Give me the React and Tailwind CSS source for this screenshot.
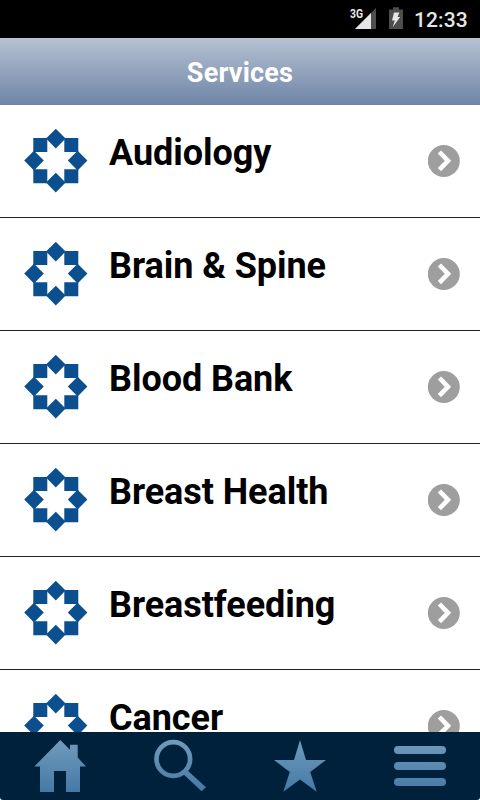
const SERVICES = [
  "Audiology",
  "Brain & Spine",
  "Blood Bank",
  "Breast Health",
  "Breastfeeding",
  "Cancer",
];

function StatusBar() {
  return (
    <div className="flex h-[38px] shrink-0 items-start bg-black pl-[350px] text-[#e6e6e6]">
      <svg className="h-[38px] w-[64px] shrink-0" viewBox="350 0 64 38">
        <path d="M355 29 L376 8 V29 Z" fill="#4d4d4d" />
        <path d="M355 29 L371 13 V29 Z" fill="#e6e6e6" />
        <text x="350" y="17.6" fontFamily="Roboto" fontWeight="700" fontSize="12.3" textLength="13" lengthAdjust="spacingAndGlyphs" fill="#e6e6e6">
          3G
        </text>
        <path d="M389 9.5 H393 V7.3 H399 V9.5 H403 V29 H389 Z" fill="#4d4d4d" />
        <path d="M394 12.5 H399.4 L397.6 17 H400.2 L392.8 27 L394.8 20.5 H392 Z" fill="#e6e6e6" />
      </svg>
      <span className="mt-px text-[21px] font-medium leading-[39px] tracking-[0.1px]">12:33</span>
    </div>
  );
}

function Logo() {
  return (
    <svg className="ml-6 mt-6 h-16 w-16 shrink-0" viewBox="0 0 64 64" fill="#0b4f8f">
      <path d="M9.3 9.1H23.3V23.1H9.3ZM40.3 9.1H54.3V23.1H40.3ZM9.3 40.2H23.3V54.2H9.3ZM40.3 40.2H54.3V54.2H40.3Z" />
      <path d="M31.8 -0.2L41.6 9.6L31.8 19.4L22 9.6Z" />
      <path d="M31.8 43.8L41.6 53.6L31.8 63.4L22 53.6Z" />
      <path d="M10 21.8L19.8 31.6L10 41.4L0.2 31.6Z" />
      <path d="M53.6 21.8L63.4 31.6L53.6 41.4L43.8 31.6Z" />
    </svg>
  );
}

function Arrow() {
  return (
    <svg className="mr-5 mt-10 h-8 w-8 shrink-0" viewBox="0 0 32 32">
      <circle cx="15.8" cy="16" r="16" fill="#9e9e9e" />
      <path d="M11.4 7 L20 15.8 L11.4 24.6" fill="none" stroke="#fff" strokeWidth="4.6" />
    </svg>
  );
}

function Row({ name }) {
  return (
    <li className="flex h-[113px] shrink-0 items-start border-b border-[#222]">
      <Logo />
      <span className="ml-[21px] mt-[27px] flex-1 whitespace-nowrap text-[36px] font-bold leading-[42px] tracking-[-0.06px] text-black">
        {name}
      </span>
      <Arrow />
    </li>
  );
}

function TabBar() {
  return (
    <nav className="grid h-[68px] shrink-0 grid-cols-4 rounded-b-[3px] bg-[#00213b]">
      <svg className="h-[68px] w-[120px]" viewBox="0 732 120 68">
        <defs>
          <linearGradient id="tab" gradientUnits="userSpaceOnUse" x1="0" y1="740" x2="0" y2="792">
            <stop offset="0" stopColor="#719bbb" />
            <stop offset="1" stopColor="#4479a5" />
          </linearGradient>
        </defs>
        <path d="M60.3 740 L70 749.7 V744.7 H77.7 V757.5 L86 766.5 H80 V792 H66 V771 H54 V792 H40 V766.5 H34.3 Z" fill="url(#tab)" />
      </svg>
      <svg className="h-[68px] w-[120px]" viewBox="0 732 120 68">
        <circle cx="53.3" cy="759" r="16.8" fill="none" stroke="url(#tab)" strokeWidth="4.7" />
        <path d="M66.4 769.6 L86 787.3 L81.6 791.3 L62.6 773.6 Z" fill="url(#tab)" />
      </svg>
      <svg className="h-[68px] w-[120px]" viewBox="0 732 120 68">
        <path d="M60 740 L66 760 H86 L70.2 772 L76.7 791.7 L60 779.5 L43.3 791.7 L49.8 772 L34 760 H54 Z" fill="url(#tab)" />
      </svg>
      <svg className="h-[68px] w-[120px]" viewBox="0 732 120 68" fill="url(#tab)">
        <rect x="34" y="746" width="52" height="8" rx="4" />
        <rect x="34" y="762" width="52" height="8" rx="4" />
        <rect x="34" y="778" width="52" height="8" rx="4" />
      </svg>
    </nav>
  );
}

export default function App() {
  return (
    <div className="flex h-[800px] w-[480px] flex-col overflow-hidden bg-white font-[Roboto,sans-serif]">
      <StatusBar />
      <header className="flex h-[67px] shrink-0 items-center justify-center bg-linear-to-b from-[#b6c2d2] to-[#6f85a7] pt-[3px]">
        <h1 className="text-[27px] font-bold leading-8 tracking-[0.2px] text-white">Services</h1>
      </header>
      <ul className="min-h-0 flex-1 overflow-hidden">
        {SERVICES.map((name) => (
          <Row key={name} name={name} />
        ))}
      </ul>
      <TabBar />
    </div>
  );
}
